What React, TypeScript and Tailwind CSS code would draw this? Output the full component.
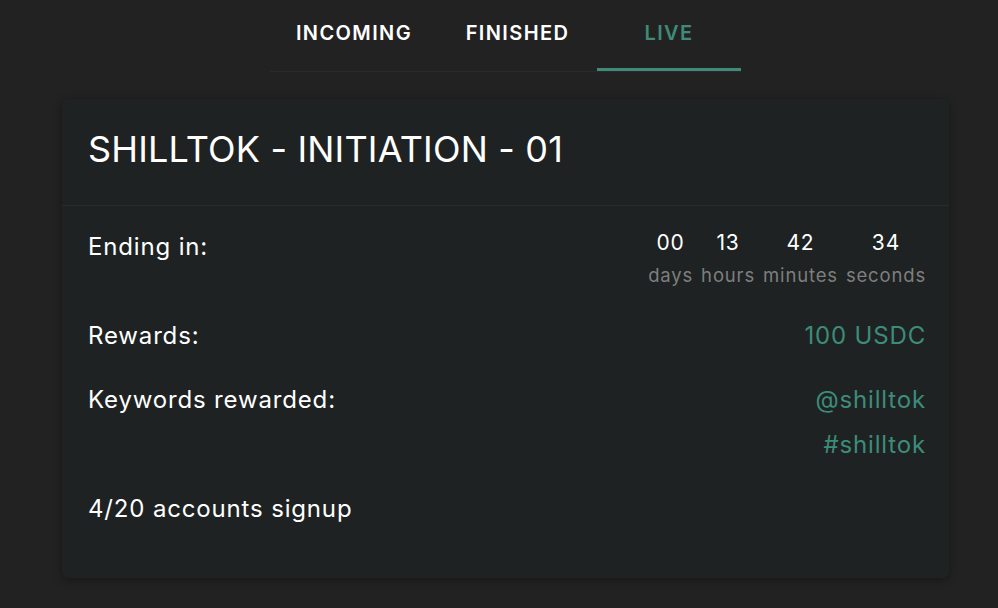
import React from "react";

const TABS = [
  { label: "INCOMING", w: "w-[168px]" },
  { label: "FINISHED", w: "w-[159px]" },
  { label: "LIVE", w: "w-[144px]", active: true },
];

const COUNTDOWN = [
  { value: "00", label: "days" },
  { value: "13", label: "hours" },
  { value: "42", label: "minutes" },
  { value: "34", label: "seconds" },
];

export default function App() {
  return (
    <div className="min-h-[608px] bg-[#222222] font-['Inter',sans-serif] text-white">
      <div className="flex justify-center pl-[13px]">
        <div className="flex border-b border-[#2a2a2a]">
          {TABS.map((t) => (
            <div
              key={t.label}
              className={`${t.w} flex h-[71px] flex-col items-center justify-between`}
            >
              <span
                className={`pt-[18px] text-[20px] font-semibold tracking-[0.07em] ${
                  t.active ? "text-[#3f8a78]" : "text-white"
                }`}
              >
                {t.label}
              </span>
              <span className={`h-[3px] w-full ${t.active ? "bg-[#3f8a78]" : ""}`} />
            </div>
          ))}
        </div>
      </div>

      <div className="mx-[62px] mt-[27px] w-[887px] rounded-md bg-[#1f2222] shadow-[0_2px_8px_rgba(0,0,0,0.35)]">
        <div className="border-b border-[#282c2c] px-[26px] pt-[26px] pb-[32px]">
          <h1 className="text-[36px] leading-[48px] font-normal tracking-[0.005em]">
            SHILLTOK - INITIATION - 01
          </h1>
        </div>

        <div className="pl-[26px] pr-[23px] pt-[21px] pb-[53px] text-[24px] leading-[32px] tracking-[0.035em]">
          <div className="flex items-start justify-between">
            <span className="mt-[4px]">Ending in:</span>
            <div className="flex gap-[8px]">
              {COUNTDOWN.map((c) => (
                <div key={c.label} className="flex flex-col items-center">
                  <span className="text-[21px] leading-[32px]">{c.value}</span>
                  <span className="text-[18.5px] leading-[32px] text-[#7d7f7f]">{c.label}</span>
                </div>
              ))}
            </div>
          </div>

          <div className="mt-[29px] flex justify-between">
            <span>Rewards:</span>
            <span className="text-[#3d8c7a]">100 USDC</span>
          </div>

          <div className="mt-[32px] flex justify-between">
            <span>Keywords rewarded:</span>
            <div className="flex flex-col items-end gap-[13px]">
              <span className="text-[#3d8c7a]">@shilltok</span>
              <span className="text-[#3d8c7a]">#shilltok</span>
            </div>
          </div>

          <div className="mt-[32px]">4/20 accounts signup</div>
        </div>
      </div>
    </div>
  );
}
